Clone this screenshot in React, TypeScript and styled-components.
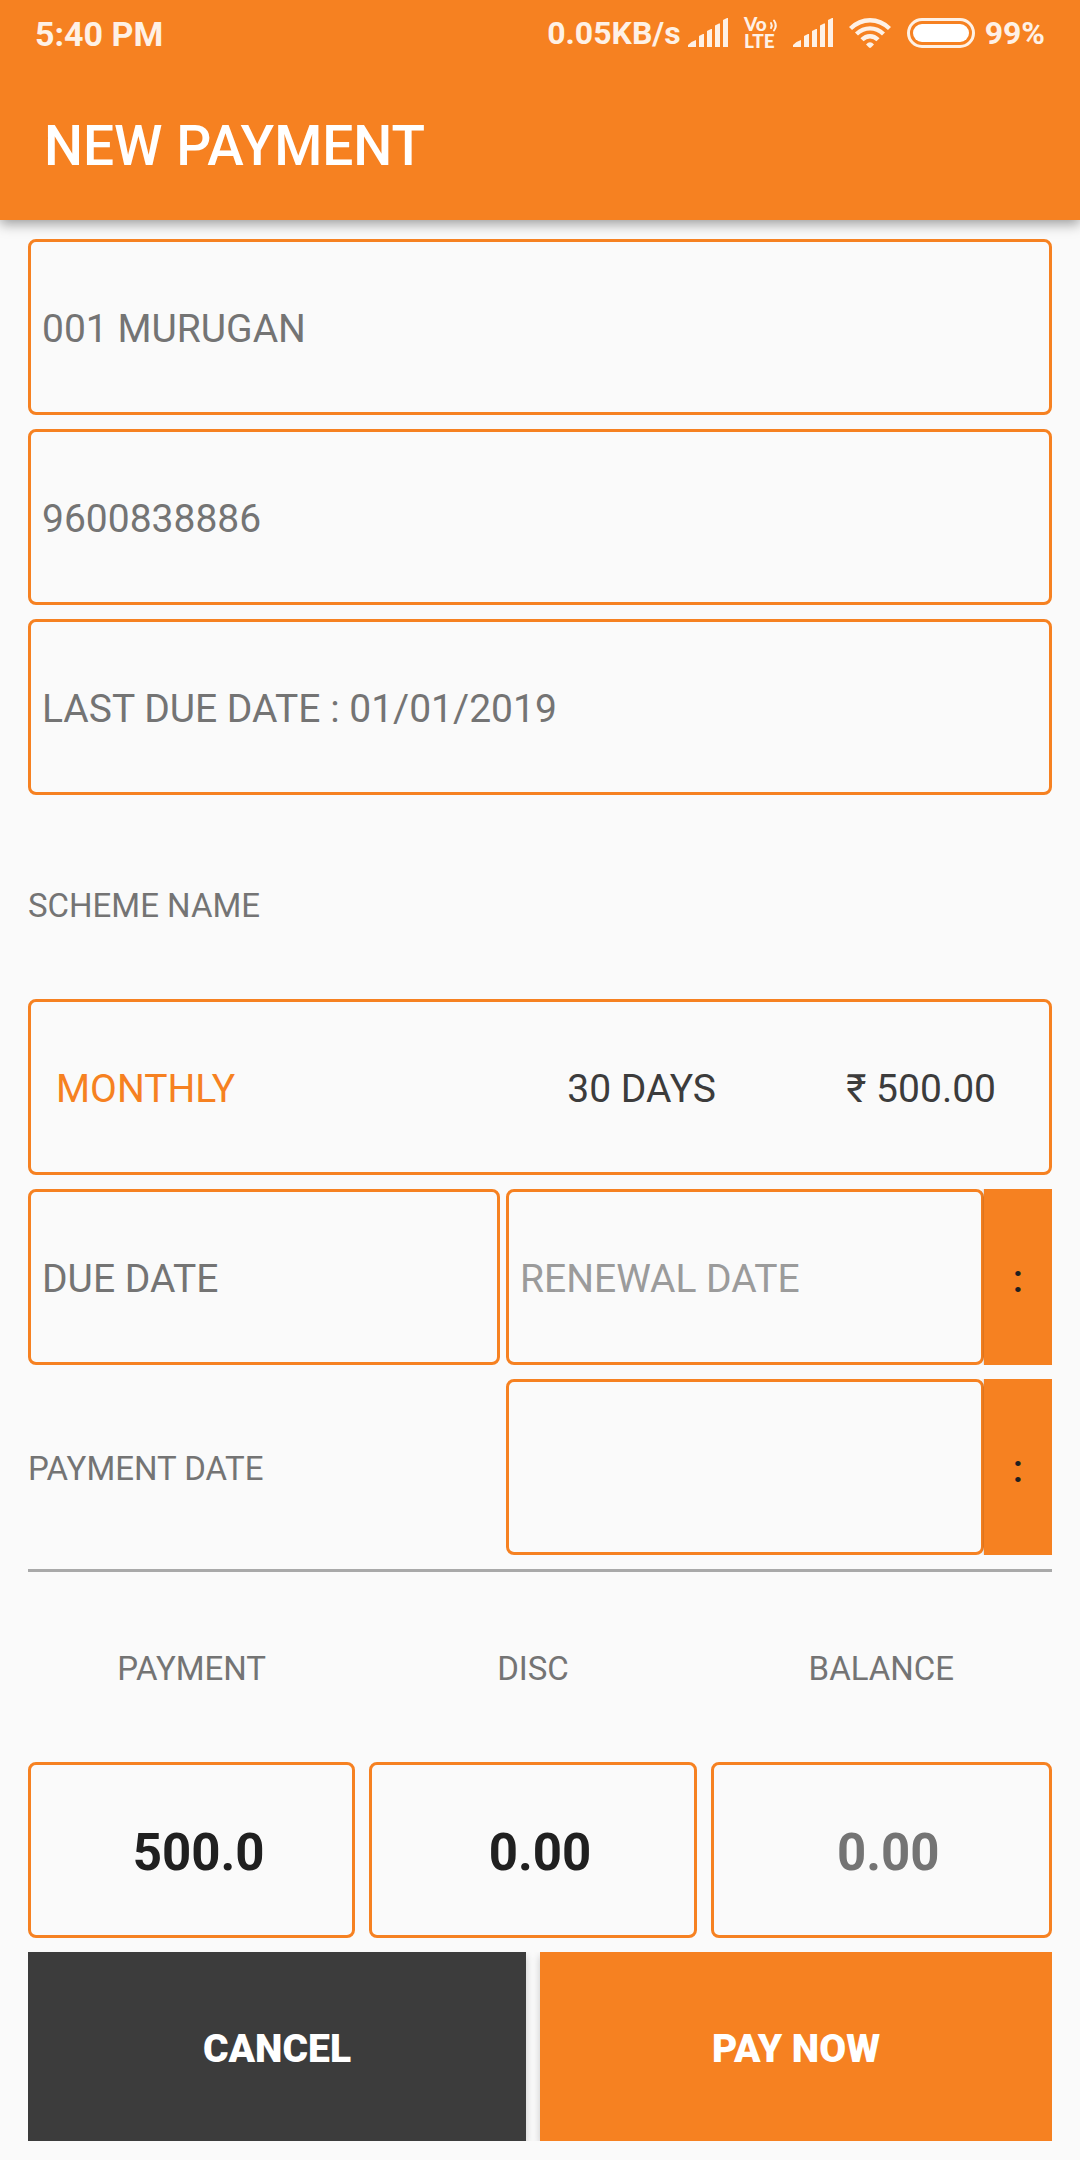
import React from "react";
import styled, { createGlobalStyle } from "styled-components";

const orange = "#f68121";
const grey = "#747474";
const dark = "#3c3c3c";
const ink = "#202020";
const paper = "#fafafa";
const statusTint = "#fef1e6";

const GlobalStyle = createGlobalStyle`
  *, *::before, *::after { box-sizing: border-box; }
  body {
    margin: 0;
    background: ${paper};
    font-family: Roboto, "Noto Sans", sans-serif;
  }
  input, button { font-family: inherit; margin: 0; }
`;

const Page = styled.div`
  min-height: 100vh;
  display: flex;
  flex-direction: column;
`;

const Header = styled.header`
  background: ${orange};
  box-shadow: 0 4px 12px rgba(0, 0, 0, 0.38);
`;

const StatusBar = styled.div`
  display: flex;
  align-items: center;
  justify-content: space-between;
  padding: 0 35px;
  height: 66px;
  color: ${statusTint};
  font-size: 34px;
  line-height: 44px;
  font-weight: 700;
`;

const Clock = styled.span`
  padding-top: 2px;
`;

const StatusGroup = styled.div`
  display: flex;
  align-items: center;
  gap: 16px;
`;

const StatusPair = styled.span<{ $gap: number }>`
  display: flex;
  align-items: center;
  gap: ${(p) => p.$gap}px;
  font-size: 32px;
`;

const Title = styled.h1`
  margin: 0;
  padding: 48px 44px 42px;
  color: #fff;
  font-size: 55px;
  line-height: 64px;
  font-weight: 500;
`;

const Form = styled.form`
  display: flex;
  flex-direction: column;
  gap: 14px;
  padding: 19px 28px;
`;

const Box = styled.div`
  border: 3px solid ${orange};
  border-radius: 8px;
  padding: 65px 11px 61px;
  color: ${grey};
  font-size: 39px;
  line-height: 44px;
`;

const SchemeBox = styled(Box)`
  display: grid;
  grid-template-columns: 19fr 14fr 14fr;
  padding-left: 25px;
  padding-right: 53px;
  color: ${dark};
  text-align: right;
`;

const SchemeName = styled.span`
  color: ${orange};
  text-align: left;
`;

const SectionLabel = styled.div`
  margin-top: 14px;
  padding: 61px 0 57px;
  color: ${grey};
  font-size: 33px;
  line-height: 44px;
`;

const DateRow = styled.div`
  display: grid;
  grid-template-columns: 1fr 1fr 68px;
  align-items: center;
  overflow: hidden;
`;

const DueBox = styled(Box)`
  margin-right: 6px;
`;

const RowLabel = styled.label`
  padding-top: 4px;
  color: ${grey};
  font-size: 33px;
  line-height: 44px;
`;

const DateInput = styled.input`
  width: 100%;
  min-width: 0;
  height: 176px;
  border: 3px solid ${orange};
  border-radius: 8px;
  padding: 4px 11px 0;
  background: transparent;
  color: ${ink};
  font-size: 39px;
  line-height: 44px;
  outline: none;
  &::placeholder { color: #9b9b9b; opacity: 1; }
`;

const PickButton = styled.button`
  align-self: stretch;
  border: 0;
  padding: 4px 0 0;
  background: ${orange};
  box-shadow: 0 0 3px rgba(0, 0, 0, 0.25);
  color: ${ink};
  font-size: 39px;
  line-height: 44px;
  font-weight: 500;
`;

const Rule = styled.hr`
  width: 100%;
  margin: 0;
  border: 0;
  border-top: 3px solid #a9a9a9;
`;

const Amounts = styled.div`
  display: grid;
  grid-template-columns: 1fr 1fr 1fr;
`;

const AmountColumn = styled.div`
  display: flex;
  flex-direction: column;
  gap: 14px;
  &:not(:last-child) { margin-right: 14px; }
`;

const AmountLabel = styled.label`
  padding: 61px 0 57px;
  color: ${grey};
  font-size: 33px;
  line-height: 44px;
  text-align: center;
`;

const AmountInput = styled.input<{ $muted?: boolean }>`
  width: 100%;
  min-width: 0;
  height: 176px;
  border: 3px solid ${orange};
  border-radius: 8px;
  padding: 4px 0 0 14px;
  background: transparent;
  color: ${(p) => (p.$muted ? grey : ink)};
  font-size: 51px;
  line-height: 60px;
  font-weight: 700;
  text-align: center;
  outline: none;
`;

const Actions = styled.div`
  display: grid;
  grid-template-columns: 1fr 1fr;
  overflow: hidden;
`;

const Action = styled.button<{ $primary?: boolean }>`
  border: 0;
  margin-right: ${(p) => (p.$primary ? 0 : 14)}px;
  padding: 75px 0 69px;
  background: ${(p) => (p.$primary ? orange : dark)};
  box-shadow: 0 4px 8px rgba(0, 0, 0, 0.2);
  color: #fff;
  font-size: 39px;
  line-height: 45px;
  font-weight: 900;
`;

const Signal = () => (
  <svg width="40" height="30" viewBox="0 0 40 30" fill="currentColor" aria-hidden="true">
    <path d="M0 29v-2q3-3.500 8-5v7z" />
    <path d="M11 29V18l4-2h1v13z" />
    <path d="M19 29V13l4-2h1v18z" />
    <path d="M27 29V7.500L31 5.500h1V29z" />
    <path d="M35 29V2l4-2h1v29z" />
  </svg>
);

const VoLte = () => (
  <svg width="33" height="30" viewBox="0 0 33 30" overflow="visible" fill="currentColor" aria-hidden="true">
    <text fontFamily="Lato, sans-serif" fontWeight="900" fontSize="19">
      <tspan x="0" y="13">Vo</tspan>
      <tspan x="0" y="30">LTE</tspan>
    </text>
    <g fill="none" stroke="currentColor" strokeWidth="2" strokeLinecap="round">
      <path d="M27 5q1.500 2.500 0 5" />
      <path d="M30 2.500q3.500 5 0 10" />
    </g>
  </svg>
);

const Wifi = () => (
  <svg width="42" height="30" viewBox="0 0 42 30" aria-hidden="true">
    <g fill="none" stroke="currentColor" strokeWidth="4.400" strokeLinecap="butt">
      <path d="M1.500 10.500Q10 2.200 21 2.200T40.500 10.500" />
      <path d="M7.500 16Q13.500 10.400 21 10.400T34.500 16" />
      <path d="M13 21.800Q16.500 18.200 21 18.200T29 21.800" />
    </g>
    <path d="M17 26.500q4-4.500 8 0L22 29.500q-1 .8-2 0z" fill="currentColor" />
  </svg>
);

const Battery = () => (
  <svg width="68" height="30" viewBox="0 0 68 30" aria-hidden="true">
    <rect x="1.500" y="1.500" width="65" height="27" rx="13.500" fill="none" stroke="currentColor" strokeWidth="3" />
    <rect x="6" y="6" width="56" height="18" rx="9" fill="#fff" />
  </svg>
);

export default function App() {
  return (
    <Page>
      <GlobalStyle />
      <Header>
        <StatusBar>
          <Clock>5:40 PM</Clock>
          <StatusGroup>
            <StatusPair $gap={7}>
              0.05KB/s
              <Signal />
            </StatusPair>
            <VoLte />
            <Signal />
            <Wifi />
            <StatusPair $gap={10}>
              <Battery />
              99%
            </StatusPair>
          </StatusGroup>
        </StatusBar>
        <Title>NEW PAYMENT</Title>
      </Header>
      <Form onSubmit={(e) => e.preventDefault()}>
        <Box>001 MURUGAN</Box>
        <Box>9600838886</Box>
        <Box>LAST DUE DATE : 01/01/2019</Box>
        <SectionLabel>SCHEME NAME</SectionLabel>
        <SchemeBox>
          <SchemeName>MONTHLY</SchemeName>
          <span>30 DAYS</span>
          <span>₹ 500.00</span>
        </SchemeBox>
        <DateRow>
          <DueBox>DUE DATE</DueBox>
          <DateInput placeholder="RENEWAL DATE" aria-label="Renewal date" />
          <PickButton type="button" aria-label="Pick renewal date">:</PickButton>
        </DateRow>
        <DateRow>
          <RowLabel htmlFor="payment-date">PAYMENT DATE</RowLabel>
          <DateInput id="payment-date" />
          <PickButton type="button" aria-label="Pick payment date">:</PickButton>
        </DateRow>
        <Rule />
        <Amounts>
          <AmountColumn>
            <AmountLabel htmlFor="payment">PAYMENT</AmountLabel>
            <AmountInput id="payment" inputMode="decimal" defaultValue="500.0" />
          </AmountColumn>
          <AmountColumn>
            <AmountLabel htmlFor="disc">DISC</AmountLabel>
            <AmountInput id="disc" inputMode="decimal" defaultValue="0.00" />
          </AmountColumn>
          <AmountColumn>
            <AmountLabel htmlFor="balance">BALANCE</AmountLabel>
            <AmountInput id="balance" $muted readOnly value="0.00" />
          </AmountColumn>
        </Amounts>
        <Actions>
          <Action type="button">CANCEL</Action>
          <Action type="submit" $primary>PAY NOW</Action>
        </Actions>
      </Form>
    </Page>
  );
}
